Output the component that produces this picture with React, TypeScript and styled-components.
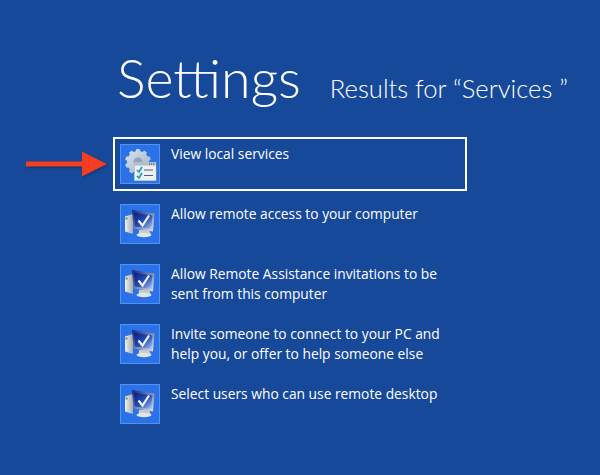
import React from 'react';
import styled, { createGlobalStyle } from 'styled-components';

interface Result {
    label: string;
    icon: 'services' | 'computer';
    selected?: boolean;
}

const results: Result[] = [
    { label: 'View local services', icon: 'services', selected: true },
    { label: 'Allow remote access to your computer', icon: 'computer' },
    { label: 'Allow Remote Assistance invitations to be sent from this computer', icon: 'computer' },
    { label: 'Invite someone to connect to your PC and help you, or offer to help someone else', icon: 'computer' },
    { label: 'Select users who can use remote desktop', icon: 'computer' },
];

const gearPath = (() => {
    const points: string[] = [];
    const teeth = 10;
    for (let i = 0; i < teeth; i++) {
        const step = (Math.PI * 2) / teeth;
        const a = i * step - Math.PI / 2;
        const polar = (r: number, t: number) =>
            `${(17 + r * Math.cos(t)).toFixed(2)} ${(17 + r * Math.sin(t)).toFixed(2)}`;
        points.push(polar(11, a - step * 0.34));
        points.push(polar(13, a - step * 0.2));
        points.push(polar(13, a + step * 0.2));
        points.push(polar(11, a + step * 0.34));
    }
    return `M${points.join('L')}Z`;
})();

const ServicesIcon = () => (
    <svg width="38" height="38" viewBox="0 0 38 38">
        <defs>
            <linearGradient id="gear" x1="0" y1="0" x2="1" y2="1">
                <stop offset="0" stopColor="#dbe4ec" />
                <stop offset="1" stopColor="#9db0c4" />
            </linearGradient>
        </defs>
        <path d={gearPath} fill="url(#gear)" />
        <circle cx="17" cy="17" r="4.5" fill="#8ea6c4" />
        <rect x="13" y="17" width="22.5" height="19" fill="#8b949e" />
        <rect x="13.5" y="17.5" width="21.5" height="18" fill="#eef1f4" />
        <rect x="13.5" y="17.5" width="21.5" height="3" fill="#b4bdc5" />
        <path d="M28 19h1M30 19h1M32 19h1" stroke="#444c55" strokeWidth="1" />
        <path d="M16 25l2 2 3-5M16 31l2 2 3-5" fill="none" stroke="#12a0c4" strokeWidth="1.7" />
        <path d="M23 25h9M23 30.5h9" stroke="#555d78" strokeWidth="1.2" />
    </svg>
);

const ComputerIcon = () => (
    <svg width="38" height="38" viewBox="0 0 38 38">
        <defs>
            <linearGradient id="screen" x1="0" y1="0" x2="1" y2="1">
                <stop offset="0" stopColor="#0a1c86" />
                <stop offset="0.55" stopColor="#2450bc" />
                <stop offset="1" stopColor="#b4cdf0" />
            </linearGradient>
            <linearGradient id="tower" x1="0" y1="0" x2="1" y2="0">
                <stop offset="0" stopColor="#eef0f0" />
                <stop offset="1" stopColor="#a3acb0" />
            </linearGradient>
            <linearGradient id="bezel" x1="0" y1="0" x2="1" y2="1">
                <stop offset="0" stopColor="#10246e" />
                <stop offset="1" stopColor="#e2e7ec" />
            </linearGradient>
        </defs>
        <path d="M4 11.5l8-2.5v20l-8-2.5z" fill="url(#tower)" />
        <rect x="4.5" y="12.5" width="2" height="2" fill="#5a9a3c" />
        <path d="M18 25h10l2 4.5c-2 2-10 2-12.5.5z" fill="#c4ccd0" />
        <ellipse cx="23" cy="30" rx="7.5" ry="2.2" fill="#e3e6e7" />
        <path d="M11 5l22.5 3.5-1.5 18-19.5-3z" fill="url(#bezel)" />
        <path d="M13 7.5l18.5 3-1.3 13.5-16.4-2.5z" fill="url(#screen)" />
        <path d="M17.5 15.5l4 5 6.5-10" fill="none" stroke="#eef2f9" strokeWidth="2.2" />
    </svg>
);

const App = () => (
    <Page>
        <GlobalStyle />
        <Header>
            <Title>Settings</Title>
            <Subtitle>Results for “Services ”</Subtitle>
        </Header>

        <ResultList>
            {results.map(result =>
                <ResultRow key={result.label} $selected={result.selected}>
                    {result.selected && (
                        <Arrow width="84" height="28" viewBox="0 0 84 28">
                            <path d="M1 11.5h56V1.5l25 12.5-25 12.5v-10H1z" fill="#f53d21" />
                        </Arrow>
                    )}
                    <IconTile>
                        {result.icon === 'services' ? <ServicesIcon /> : <ComputerIcon />}
                    </IconTile>
                    <Label>{result.label}</Label>
                </ResultRow>
            )}
        </ResultList>
    </Page>
);

const GlobalStyle = createGlobalStyle`
    html, body {
        margin: 0;
        background: #17499a;
    }
`;

const Page = styled.div`
    box-sizing: border-box;
    width: 600px;
    height: 475px;
    padding: 44px 0 0 113px;
    overflow: hidden;
    background: #17499a;
    color: #fff;
    font-family: "Open Sans", "Liberation Sans", sans-serif;
`;

const Header = styled.header`
    display: flex;
    align-items: baseline;
    height: 93px;
    font-family: Lato, "Open Sans", sans-serif;
`;

const Title = styled.h1`
    margin: 0 0 0 4px;
    font-size: 53.7px;
    font-weight: 300;
    line-height: 67px;
`;

const Subtitle = styled.h2`
    margin: 0 0 0 29px;
    font-size: 25.6px;
    font-weight: 300;
    line-height: 30px;
    white-space: nowrap;
`;

const ResultList = styled.div`
    display: flex;
    flex-direction: column;
    gap: 6px;
    width: 354px;
`;

const ResultRow = styled.div<{ $selected?: boolean }>`
    position: relative;
    display: flex;
    gap: 11px;
    box-sizing: border-box;
    height: 54px;
    padding: 5px;
    border: 2px solid ${props => (props.$selected ? '#fff' : 'transparent')};
`;

const Arrow = styled.svg`
    position: absolute;
    top: 11px;
    left: -90px;
    filter: drop-shadow(1px 1px 1px rgba(0, 0, 0, 0.3));
`;

const IconTile = styled.div`
    display: flex;
    align-items: center;
    justify-content: center;
    flex: none;
    box-sizing: border-box;
    width: 40px;
    height: 40px;
    border: 1px solid #5094f2;
    background: #2b72ea;
`;

const Label = styled.div`
    width: 282px;
    font-size: 13.8px;
    line-height: 20px;
`;

export default App;
